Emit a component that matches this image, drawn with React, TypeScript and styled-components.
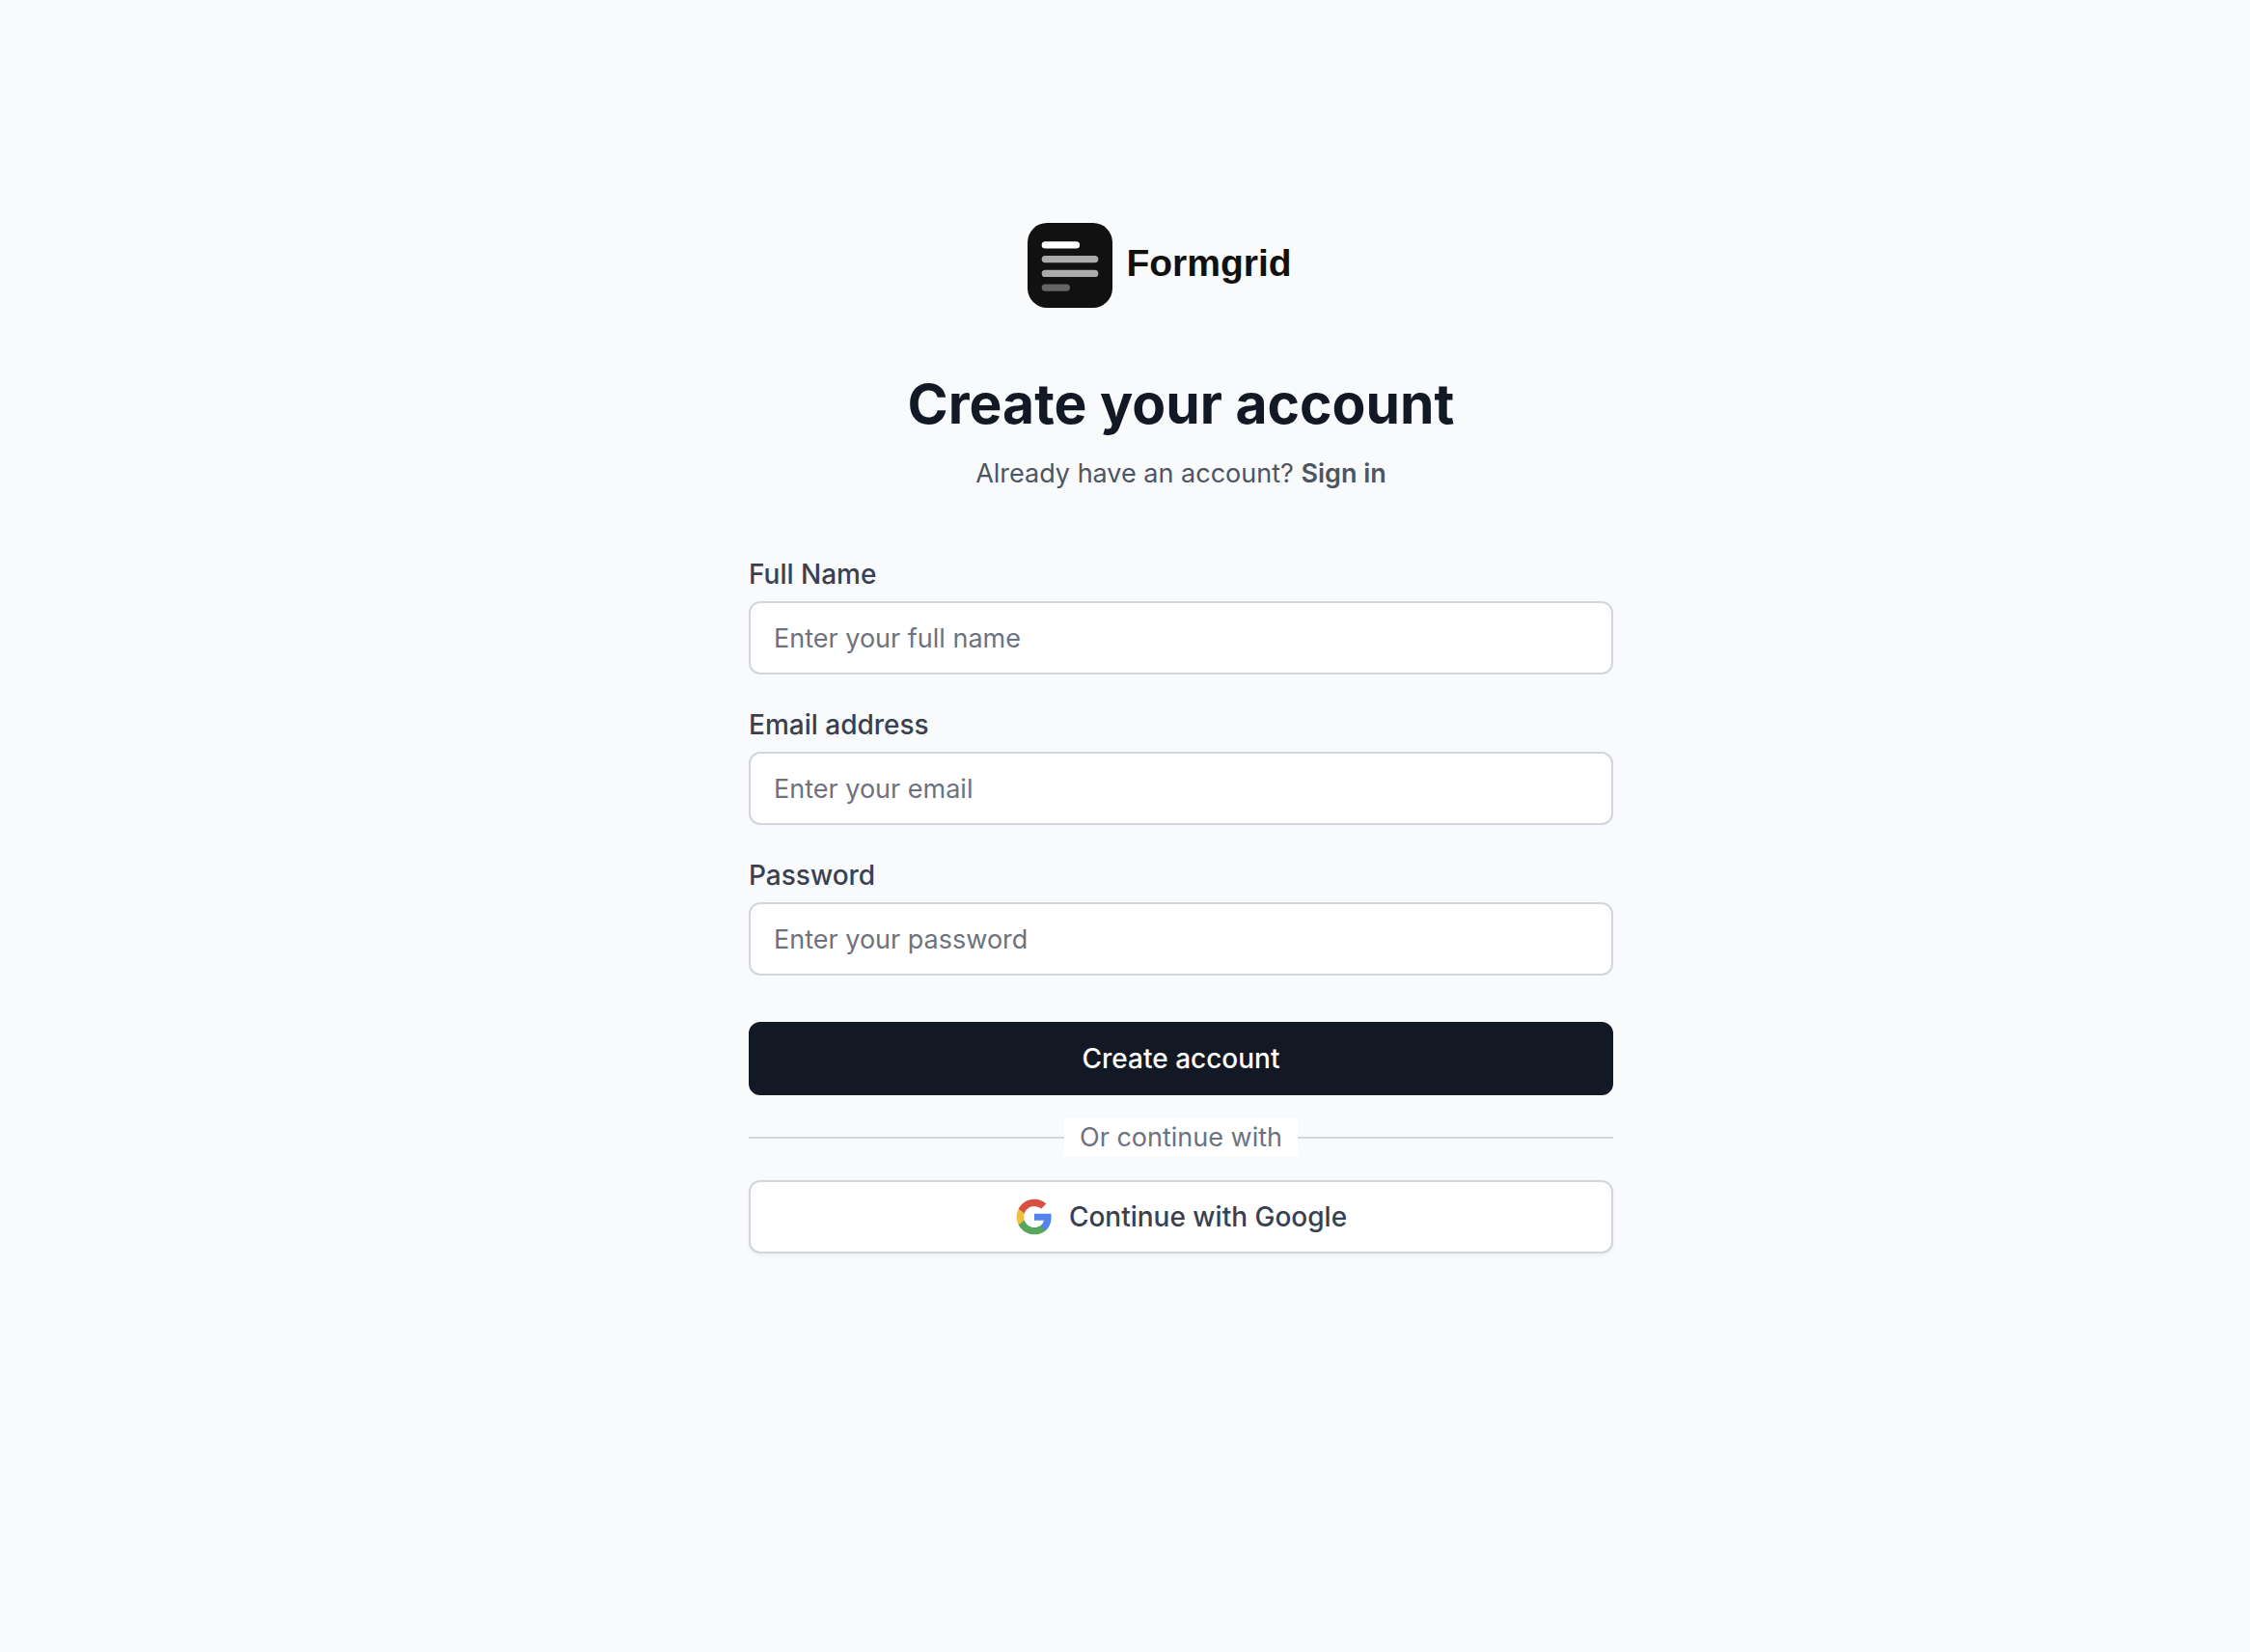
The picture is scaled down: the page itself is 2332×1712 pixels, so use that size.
import React from "react";
import styled, { createGlobalStyle } from "styled-components";

const GlobalStyle = createGlobalStyle`
  *, *::before, *::after { box-sizing: border-box; }
  body {
    margin: 0;
    background: #f9fafc;
    color: #131825;
    font-family: Inter, "Liberation Sans", sans-serif;
    font-size: 27px;
    line-height: 40px;
    -webkit-font-smoothing: antialiased;
  }
  h1, p { margin: 0; }
`;

const Page = styled.main`
  min-height: 100vh;
  display: flex;
  flex-direction: column;
  align-items: center;
  padding: 231px 0 96px 116px;
`;

const Panel = styled.div`
  width: 100%;
  max-width: 896px;
  display: flex;
  flex-direction: column;
`;

const Brand = styled.div`
  display: flex;
  align-items: center;
  justify-content: center;
  gap: 14px;
  padding-right: 44px;
  color: #111111;
  font-family: "Liberation Sans", Arial, sans-serif;
  font-size: 39px;
  font-weight: 700;
  line-height: 48px;
`;

const BrandMark = styled.svg`
  width: 88px;
  height: 88px;
`;

const BrandName = styled.span`
  padding-bottom: 4px;
`;

const Title = styled.h1`
  margin-top: 64px;
  text-align: center;
  font-size: 57px;
  font-weight: 700;
  line-height: 72px;
`;

const Subtitle = styled.p`
  margin-top: 16px;
  text-align: center;
  color: #4d5562;
`;

const SignInLink = styled.a`
  color: inherit;
  font-weight: 600;
  text-decoration: none;
`;

const Form = styled.form`
  margin-top: 64px;
  display: flex;
  flex-direction: column;
  gap: 24px;
`;

const Fields = styled.div`
  display: flex;
  flex-direction: column;
  gap: 32px;
  margin-bottom: 24px;
`;

const Field = styled.div`
  display: flex;
  flex-direction: column;
  gap: 8px;
`;

const Label = styled.label`
  color: #394150;
  font-size: 28px;
  font-weight: 500;
`;

const Input = styled.input`
  width: 100%;
  height: 76px;
  padding: 16px 24px;
  border: 2px solid #d2d5db;
  border-radius: 12px;
  background: #ffffff;
  color: #131825;
  font: inherit;
  &::placeholder { color: #6c727f; opacity: 1; }
`;

const Button = styled.button<{ $primary?: boolean }>`
  width: 100%;
  height: 76px;
  display: flex;
  align-items: center;
  justify-content: center;
  gap: 16px;
  padding: 16px;
  border: 2px solid ${(p) => (p.$primary ? "#131825" : "#d2d5db")};
  border-radius: 12px;
  background: ${(p) => (p.$primary ? "#131825" : "#ffffff")};
  box-shadow: ${(p) => (p.$primary ? "none" : "0 2px 4px rgba(0, 0, 0, 0.05)")};
  color: ${(p) => (p.$primary ? "#ffffff" : "#394150")};
  font: inherit;
  font-size: 28px;
  font-weight: 500;
  cursor: pointer;
`;

const Divider = styled.div`
  display: flex;
  align-items: center;
  color: #6c727f;
  &::before, &::after {
    content: "";
    flex: 1;
    height: 2px;
    background: #d2d5db;
  }
`;

const DividerText = styled.span`
  padding: 0 16px;
  background: #ffffff;
`;

const GoogleIcon = styled.svg`
  width: 40px;
  height: 40px;
`;

const fields = [
  { id: "name", label: "Full Name", type: "text", placeholder: "Enter your full name" },
  { id: "email", label: "Email address", type: "email", placeholder: "Enter your email" },
  { id: "password", label: "Password", type: "password", placeholder: "Enter your password" },
];

export default function App() {
  return (
    <>
      <GlobalStyle />
      <Page>
        <Panel>
          <Brand>
            <BrandMark viewBox="0 0 48 48" aria-hidden="true">
              <rect width="48" height="48" rx="11" fill="#111111" />
              <rect x="8" y="10.5" width="21.5" height="4" rx="2" fill="#ffffff" />
              <rect x="8" y="18.5" width="32" height="4" rx="2" fill="#ababab" />
              <rect x="8" y="26.6" width="32" height="4" rx="2" fill="#ababab" />
              <rect x="8" y="34.6" width="16" height="4" rx="2" fill="#656565" />
            </BrandMark>
            <BrandName>Formgrid</BrandName>
          </Brand>
          <Title>Create your account</Title>
          <Subtitle>
            Already have an account? <SignInLink href="#signin">Sign in</SignInLink>
          </Subtitle>
          <Form onSubmit={(e) => e.preventDefault()}>
            <Fields>
              {fields.map((f) => (
                <Field key={f.id}>
                  <Label htmlFor={f.id}>{f.label}</Label>
                  <Input id={f.id} name={f.id} type={f.type} placeholder={f.placeholder} />
                </Field>
              ))}
            </Fields>
            <Button type="submit" $primary>Create account</Button>
            <Divider>
              <DividerText>Or continue with</DividerText>
            </Divider>
            <Button type="button">
              <GoogleIcon viewBox="0 0 24 24" aria-hidden="true">
                <path fill="#5383ec" d="M22.56 12.25c0-.78-.07-1.53-.2-2.25H12v4.26h5.92c-.26 1.37-1.04 2.53-2.21 3.31v2.77h3.57c2.08-1.92 3.28-4.74 3.28-8.09z" />
                <path fill="#58a55c" d="M12 23c2.97 0 5.46-.98 7.28-2.66l-3.57-2.77c-.98.66-2.23 1.06-3.71 1.06-2.86 0-5.29-1.93-6.16-4.53H2.18v2.84C3.99 20.53 7.7 23 12 23z" />
                <path fill="#f1bf42" d="M5.84 14.09c-.22-.66-.35-1.36-.35-2.09s.13-1.43.35-2.09V7.07H2.18C1.43 8.55 1 10.22 1 12s.43 3.45 1.18 4.93l2.85-2.22.81-.62z" />
                <path fill="#d85140" d="M12 5.38c1.62 0 3.06.56 4.21 1.64l3.15-3.15C17.45 2.09 14.97 1 12 1 7.7 1 3.99 3.47 2.18 7.07l3.66 2.84c.87-2.6 3.3-4.53 6.16-4.53z" />
              </GoogleIcon>
              Continue with Google
            </Button>
          </Form>
        </Panel>
      </Page>
    </>
  );
}
